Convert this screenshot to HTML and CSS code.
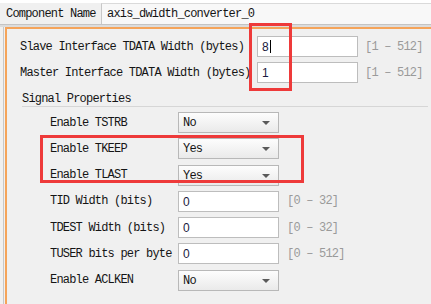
FILE: index.html
```html
<!DOCTYPE html>
<html lang="en">
<head>
    <meta charset="UTF-8">
    <title>AXI4-Stream Data Width Converter</title>
    <link rel="stylesheet" href="styles.css">
</head>
<body>
    <div class="top">
        <span class="top-label">Component Name</span>
        <div class="name-field">axis_dwidth_converter_0</div>
    </div>
    <div class="rule"></div>

    <div class="frame">
        <div class="panel">
            <div class="params">
                <span class="label">Slave Interface TDATA Width (bytes)</span>
                <div class="field">8<span class="caret"></span></div>
                <span class="range">[1 – 512]</span>

                <span class="label">Master Interface TDATA Width (bytes)</span>
                <div class="field">1</div>
                <span class="range">[1 – 512]</span>
            </div>

            <div class="group">
                <div class="group-title">Signal Properties</div>
                <div class="signals">
                    <span class="label">Enable TSTRB</span>
                    <div class="select">No<span class="arrow"></span></div>
                    <span></span>

                    <span class="label">Enable TKEEP</span>
                    <div class="select">Yes<span class="arrow"></span></div>
                    <span></span>

                    <span class="label">Enable TLAST</span>
                    <div class="select">Yes<span class="arrow"></span></div>
                    <span></span>

                    <span class="label">TID Width (bits)</span>
                    <div class="field">0</div>
                    <span class="range">[0 – 32]</span>

                    <span class="label">TDEST Width (bits)</span>
                    <div class="field">0</div>
                    <span class="range">[0 – 32]</span>

                    <span class="label">TUSER bits per byte</span>
                    <div class="field">0</div>
                    <span class="range">[0 – 512]</span>

                    <span class="label">Enable ACLKEN</span>
                    <div class="select">No<span class="arrow"></span></div>
                    <span></span>
                </div>
            </div>
        </div>
    </div>

    <!-- annotation boxes drawn over the dialog -->
    <div class="mark mark-width"></div>
    <div class="mark mark-signals"></div>
</body>
</html>
```

FILE: styles.css
```css
/* General Styles */
body {
    background-color: #F0F0F0;
    color: #151515;
    font-family: "Liberation Mono", "DejaVu Sans Mono", monospace;
    font-size: 12px;
    letter-spacing: -0.8px;
    margin: 0;
    height: 304px;
    overflow: hidden;
    position: relative;
}

.top {
    display: flex;
    align-items: center;
    border-top: 3px solid #FFFFFF;
    height: 21px;
}

.top-label {
    width: 95px;
    padding-left: 6px;
}

.name-field {
    flex: 1;
    height: 20px;
    line-height: 20px;
    padding-left: 5px;
    background: #F8F8F8;
    border-left: 1px solid #C8C8C8;
    border-top: 1px solid #DADADA;
}

.rule {
    height: 2px;
    border-top: 1px solid #C4C4C4;
    background: #DCDCDC;
}

.frame {
    margin-left: 3px;
    border-left: 1px solid #C8C8C8;
    padding-left: 1px;
    height: 280px;
}

.panel {
    border-top: 2px solid #F5A45A;
    border-left: 2px solid #F5A45A;
    height: 100%;
    padding: 7px 3px 0 13px;
}

.params {
    display: grid;
    grid-template-columns: 237px 101px auto;
    grid-auto-rows: 21px;
    row-gap: 5px;
    align-items: center;
}

.label {
    white-space: nowrap;
    overflow: hidden;
}

.field {
    height: 21px;
    line-height: 20px;
    box-sizing: border-box;
    background: #FFFFFF;
    border: 1px solid #BDBDBD;
    padding-left: 4px;
    font-family: "Liberation Sans", Arial, sans-serif;
    letter-spacing: 0;
    color: #1A1A40;
}

.caret {
    display: inline-block;
    width: 1px;
    height: 13px;
    margin-left: 1px;
    vertical-align: -2px;
    background: #000000;
}

.range {
    margin-left: 7px;
    color: #9A9A9A;
}

.group {
    margin: 9px 0 0 2px;
}

.group-title {
    height: 14px;
    line-height: 14px;
    border-bottom: 1px solid #D6D6D6;
}

.signals {
    display: grid;
    grid-template-columns: 128px 101px auto;
    grid-auto-rows: 21px;
    row-gap: 5.3px;
    align-items: center;
    margin-top: 5px;
    padding-left: 28px;
}

.signals .range {
    margin-left: 8px;
}

.select {
    position: relative;
    height: 21px;
    line-height: 20px;
    box-sizing: border-box;
    border: 1px solid #B8B8B8;
    background: linear-gradient(#FDFDFD, #EAEAEA);
    padding-left: 4px;
}

.arrow {
    position: absolute;
    right: 8px;
    top: 8px;
    border-left: 4px solid transparent;
    border-right: 4px solid transparent;
    border-top: 4px solid #5A5A5A;
}

.mark {
    position: absolute;
    border: 3px solid #EE3A3A;
    box-sizing: border-box;
}

.mark-width {
    left: 249px;
    top: 23px;
    width: 43px;
    height: 68px;
}

.mark-signals {
    left: 40px;
    top: 135px;
    width: 264px;
    height: 48px;
}
```
